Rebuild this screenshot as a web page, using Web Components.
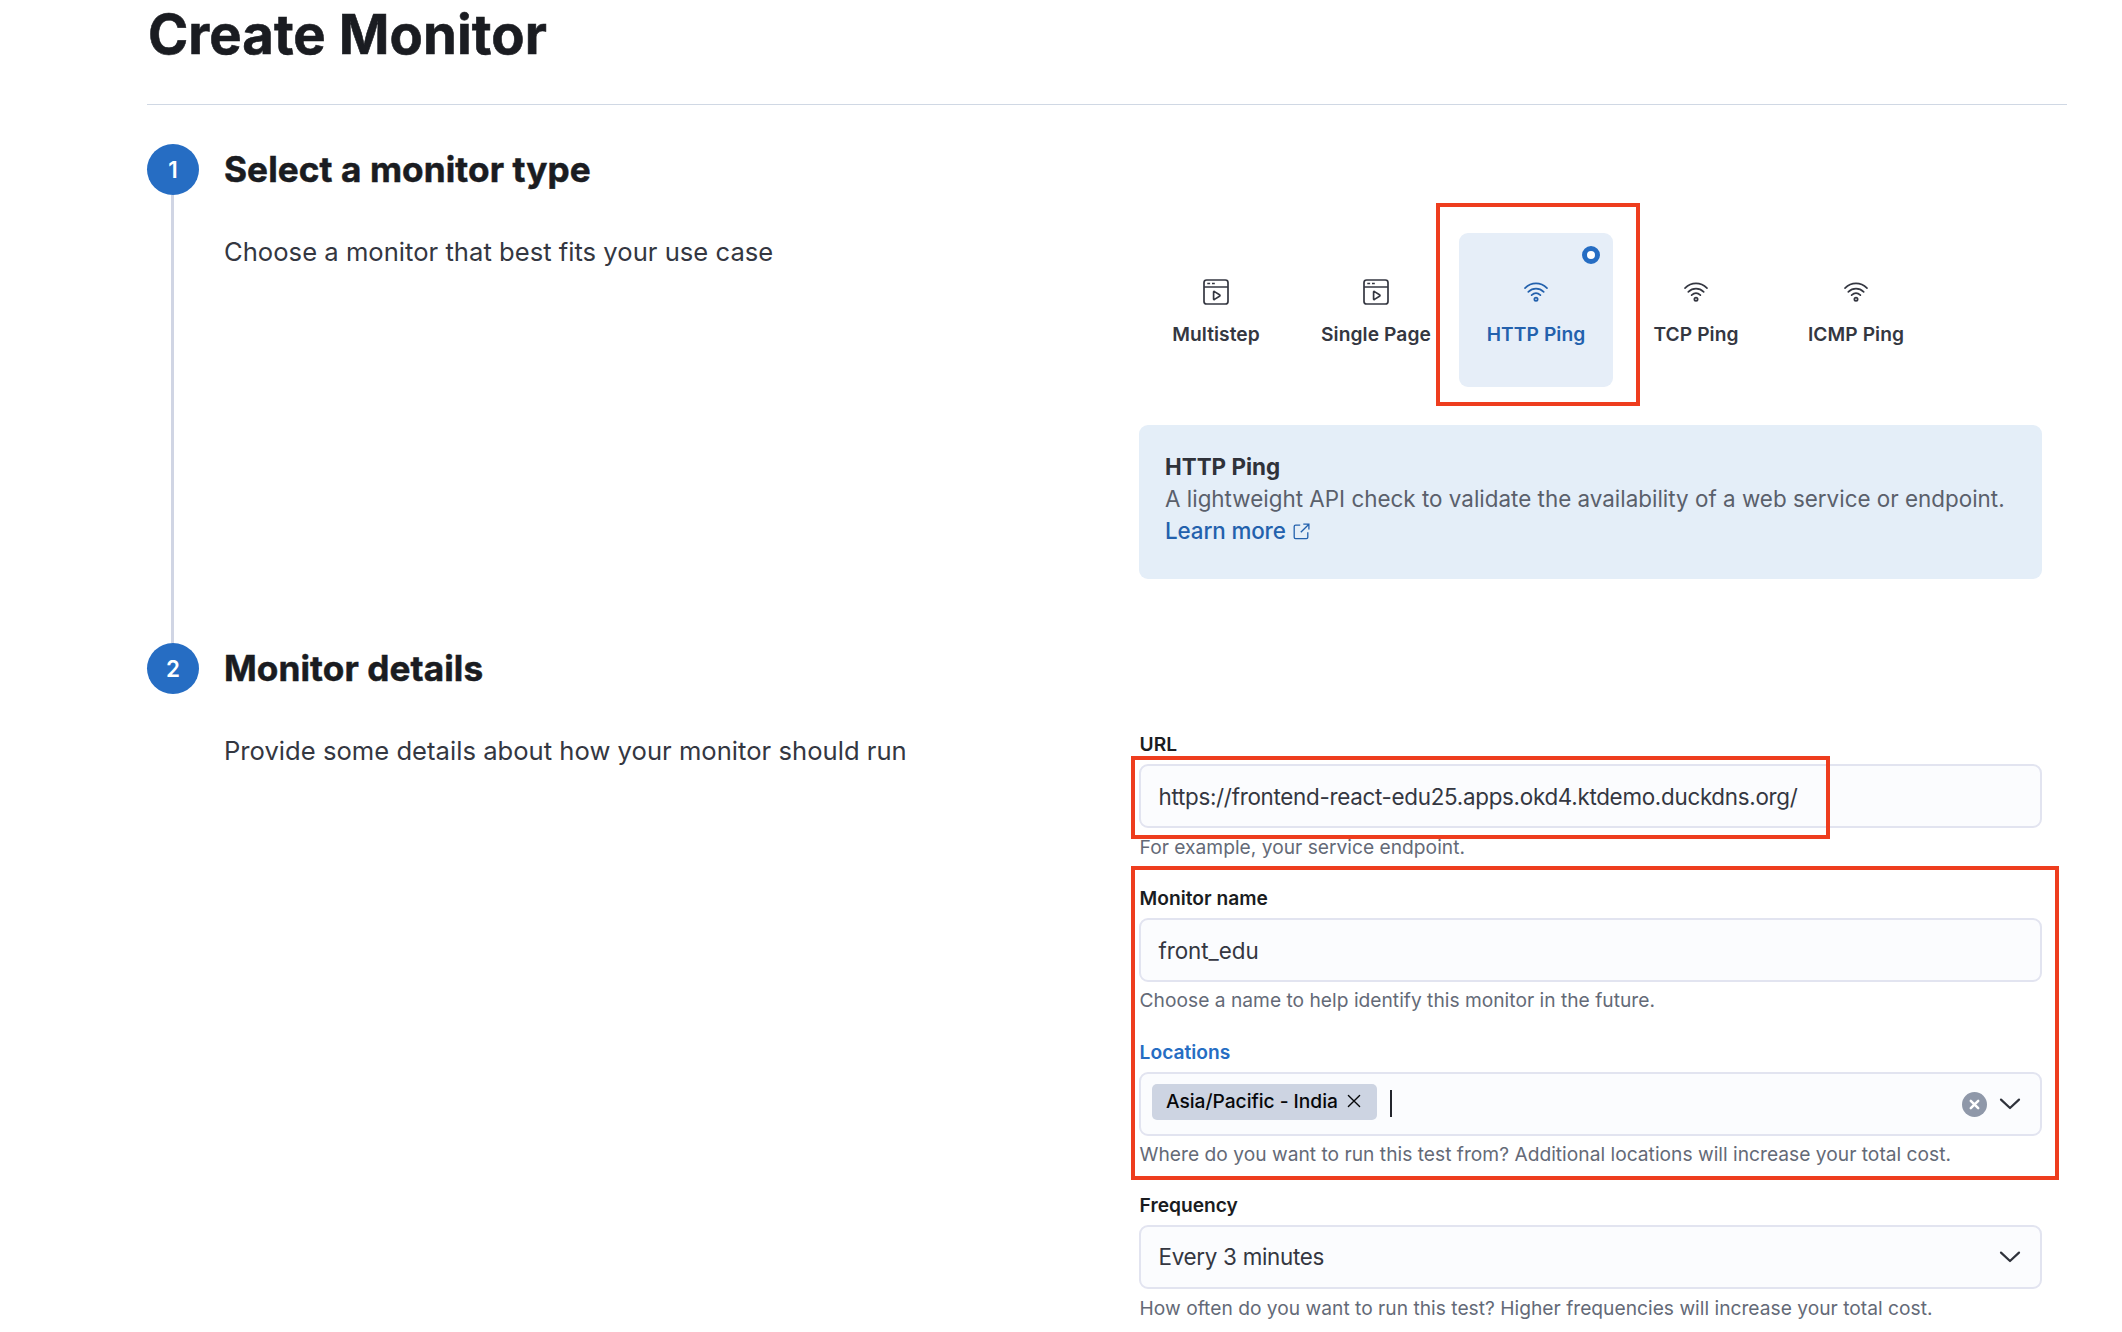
<!DOCTYPE html>
<html lang="en">
<head>
<meta charset="utf-8">
<title>Create Monitor</title>
<style>
  html, body { margin: 0; background: #fff; }
  body { width: 2122px; height: 1332px; overflow: hidden; font-family: Inter, "Liberation Sans", sans-serif; color: #343741; }
</style>
</head>
<body>
<monitor-page heading="Create Monitor">
  <form-step number="1" heading="Select a monitor type" text="Choose a monitor that best fits your use case" connected>
    <type-picker>
      <type-card icon="app" label="Multistep"></type-card>
      <type-card icon="app" label="Single Page"></type-card>
      <type-card icon="wifi" label="HTTP Ping" selected></type-card>
      <type-card icon="wifi" label="TCP Ping"></type-card>
      <type-card icon="wifi" label="ICMP Ping"></type-card>
    </type-picker>
    <type-callout heading="HTTP Ping" link="Learn more">A lightweight API check to validate the availability of a web service or endpoint.</type-callout>
  </form-step>
  <form-step number="2" heading="Monitor details" text="Provide some details about how your monitor should run">
    <form-row label="URL" help="For example, your service endpoint.">
      <span>https://frontend-react-edu25.apps.okd4.ktdemo.duckdns.org/</span>
      <mark-frame slot="mark" style="left:-8px;top:24px;width:699px;height:83px"></mark-frame>
      <mark-frame slot="mark" style="left:-8px;top:134px;width:928px;height:314px"></mark-frame>
    </form-row>
    <form-row label="Monitor name" raised help="Choose a name to help identify this monitor in the future."><span style="letter-spacing:-.05px">front_edu</span></form-row>
    <form-row label="Locations" active arrow clear tight raised help="Where do you want to run this test from? Additional locations will increase your total cost."><location-pill>Asia/Pacific - India</location-pill></form-row>
    <form-row label="Frequency" arrow help="How often do you want to run this test? Higher frequencies will increase your total cost."><span>Every 3 minutes</span></form-row>
  </form-step>
</monitor-page>

<script>
const ICONS = {
  app: `<svg width="26" height="26" viewBox="0 0 26 26" fill="none" stroke="currentColor" stroke-width="1.7"><rect x="1" y="1" width="24" height="24" rx="2.6"/><path d="M1 8h24M4.3 4.5h2.8M9 4.5h2.8"/><path d="M10.6 13.1v6.8q0 1 .9.5l5-3.2q1-.7 0-1.4l-5-3.2q-.9-.5-.9.5z" stroke-linejoin="round"/></svg>`,
  wifi: `<svg width="26" height="26" viewBox="0 0 26 26" fill="none" stroke="currentColor" stroke-width="1.7" stroke-linecap="round"><path d="M2 9.1C8.4 2.8 17.6 2.8 24 9.1M5.3 12.8c4.5-4.3 10.9-4.3 15.4 0M8.6 16.1c2.6-2.2 6.2-2.2 8.8 0"/><circle cx="13" cy="20.2" r="1.65"/></svg>`,
  popout: `<svg width="17" height="17" viewBox="0 0 17 17" fill="none" stroke="currentColor" stroke-width="1.3"><path d="M7.2 2.1H2.6Q1.2 2.1 1.2 3.5V14.2Q1.2 15.6 2.6 15.6H13.4Q14.8 15.6 14.8 14.2V9.2M10.3 1.2h5.6v5.4M15.9 1.2 7.8 9.3"/></svg>`,
  cross: `<svg width="14" height="14" viewBox="0 0 14 14" fill="none" stroke="currentColor" stroke-width="1.35" stroke-linecap="round"><path d="M1.4 1.4 12.6 12.6M12.6 1.4 1.4 12.6"/></svg>`,
  clear: `<svg width="25" height="25" viewBox="0 0 25 25"><circle cx="12.5" cy="12.5" r="12.5" fill="#8f98a9"/><path d="M8.8 8.8l7.4 7.4M16.2 8.8l-7.4 7.4" stroke="#fff" stroke-width="2.5" stroke-linecap="round"/></svg>`,
  arrow: `<svg width="22" height="12" viewBox="0 0 22 12" fill="none" stroke="#2f323b" stroke-width="2.2" stroke-linecap="round" stroke-linejoin="round"><path d="M2 1.6 11 10 20 1.6"/></svg>`
};
const define = (name, render) => customElements.define(name, class extends HTMLElement {
  constructor() { super(); this.attachShadow({ mode: 'open' }); }
  connectedCallback() { this.shadowRoot.innerHTML = render(this, k => this.getAttribute(k) || ''); }
});

define('monitor-page', (el, a) => `<style>
  :host { display: block; padding: 0 55px 0 147px; }
  h1 { margin: 0; height: 104px; padding-left: 1px; font-size: 54.4px; font-weight: 700; line-height: 68px; letter-spacing: .08px; color: #1a1c21; -webkit-text-stroke: .6px #1a1c21; border-bottom: 1px solid #d0d8e4; }
  main { display: flex; flex-direction: column; padding-top: 39px; }
</style><h1>${a('heading')}</h1><main><slot></slot></main>`);

define('form-step', (el, a) => `<style>
  :host { display: flex; gap: 25px; height: 499px; }
  :host(:not([connected])) { height: auto; }
  .rail { display: flex; flex-direction: column; align-items: center; width: 52px; flex: none; }
  .num { width: 52px; height: 51px; border-radius: 50%; background: #266dc3; color: #fff; font-size: 22.4px; font-weight: 600; line-height: 52px; text-align: center; }
  .line { flex: 1; width: 3px; margin-right: 1px; background: #d0d5e4; }
  h2 { margin: 0 0 39px; font-size: 35.2px; font-weight: 700; line-height: 50px; letter-spacing: .08px; color: #1a1c21; -webkit-text-stroke: .5px #1a1c21; }
  .row { display: flex; }
  .text { width: 915px; flex: none; font-size: 25.6px; line-height: 38px; letter-spacing: .02px; }
  .content { width: 903px; position: relative; }
</style>
<div class="rail"><div class="num">${a('number')}</div>${el.hasAttribute('connected') ? '<div class="line"></div>' : ''}</div>
<div><h2>${a('heading')}</h2><div class="row"><div class="text">${a('text')}</div><div class="content"><slot></slot></div></div></div>`);

define('type-picker', () => `<style>:host { display: flex; gap: 6px; }</style><slot></slot>`);

define('type-card', (el, a) => `<style>
  :host { display: flex; flex-direction: column; align-items: center; position: relative; width: 154px; height: 154px; border-radius: 9px; box-sizing: border-box; padding-top: 46px; }
  :host([selected]) { background: #e6eef8; color: #2361ad; }
  svg { display: block; flex: none; }
  .label { margin-top: 17px; font-size: 19.2px; font-weight: 600; line-height: 24px; letter-spacing: .08px; white-space: nowrap; }
  .radio { position: absolute; right: 13px; top: 13px; width: 18px; height: 18px; box-sizing: border-box; border: 5px solid #266dc3; border-radius: 50%; background: #fff; }
  .frame { position: absolute; left: -23px; top: -30px; width: 204px; height: 203px; }
</style>${ICONS[a('icon')]}<div class="label">${a('label')}</div>${el.hasAttribute('selected') ? '<div class="radio"></div><mark-frame class="frame"></mark-frame>' : ''}`);

define('type-callout', (el, a) => `<style>
  :host { display: block; box-sizing: border-box; height: 154px; margin-top: 38px; padding: 26px; border-radius: 9px; background: #e4eef8; font-size: 22.4px; line-height: 32px; letter-spacing: .01px; color: #5a606b; white-space: nowrap; }
  b { display: block; font-weight: 700; letter-spacing: 0; color: #2f323a; }
  a { display: flex; align-items: center; gap: 8px; color: #2361ad; font-weight: 500; letter-spacing: -.12px; }
  svg { margin-left: -1px; }
</style><b>${a('heading')}</b><slot></slot><a>${a('link')}${ICONS.popout}</a>`);

define('form-row', (el, a) => `<style>
  :host { display: block; height: 154px; white-space: nowrap; }
  :host([tight]) { height: 153px; }
  .label { padding-left: .6px; font-size: 19.2px; font-weight: 600; line-height: 24px; color: #1a1c21; }
  :host([active]) .label { color: #266dc3; }
  .box { display: flex; align-items: center; box-sizing: border-box; height: 64px; margin-top: 8px; padding: 0 19px 0 17.5px; border: 2px solid #e2e4f0; border-radius: 9px; background: #fbfcfe; font-size: 22.4px; line-height: 32px; letter-spacing: -.29px; }
  :host([active]) .box { padding-left: 11px; }
  .value { flex: 1; padding-top: 1px; }
  :host([arrow]) .value { padding-top: 0; }
  .help { margin-top: 7px; padding-left: .6px; font-size: 19.2px; line-height: 24px; letter-spacing: .01px; color: #646a77; }
  :host([raised]) .help { margin-top: 6px; }
  .tools { display: flex; align-items: center; gap: 12px; }
  svg { display: block; }
</style>
<div class="label">${a('label')}</div>
<div class="box"><div class="value"><slot></slot></div><div class="tools">${el.hasAttribute('clear') ? ICONS.clear : ''}${el.hasAttribute('arrow') ? ICONS.arrow : ''}</div></div>
<div class="help">${a('help')}</div><slot name="mark"></slot>`);

define('location-pill', () => `<style>
  :host { display: flex; align-items: center; gap: 18px; height: 36px; padding-bottom: 4px; }
  .pill { display: flex; align-items: center; gap: 9px; box-sizing: border-box; width: 225px; height: 36px; padding: 0 0 2px 14px; border-radius: 5px; background: #cdd4e2; color: #07080a; font-size: 19.2px; font-weight: 500; letter-spacing: -.03px; line-height: 34px; }
  .caret { width: 2px; height: 27px; margin: 3px 0 0 -5px; background: #23252c; }
  svg { display: block; }
</style><div class="pill"><slot></slot>${ICONS.cross}</div><div class="caret"></div>`);

define('mark-frame', () => `<style>:host { display: block; position: absolute; box-sizing: border-box; border: 4px solid #ee3d1e; z-index: 2; }</style>`);
</script>
</body>
</html>
